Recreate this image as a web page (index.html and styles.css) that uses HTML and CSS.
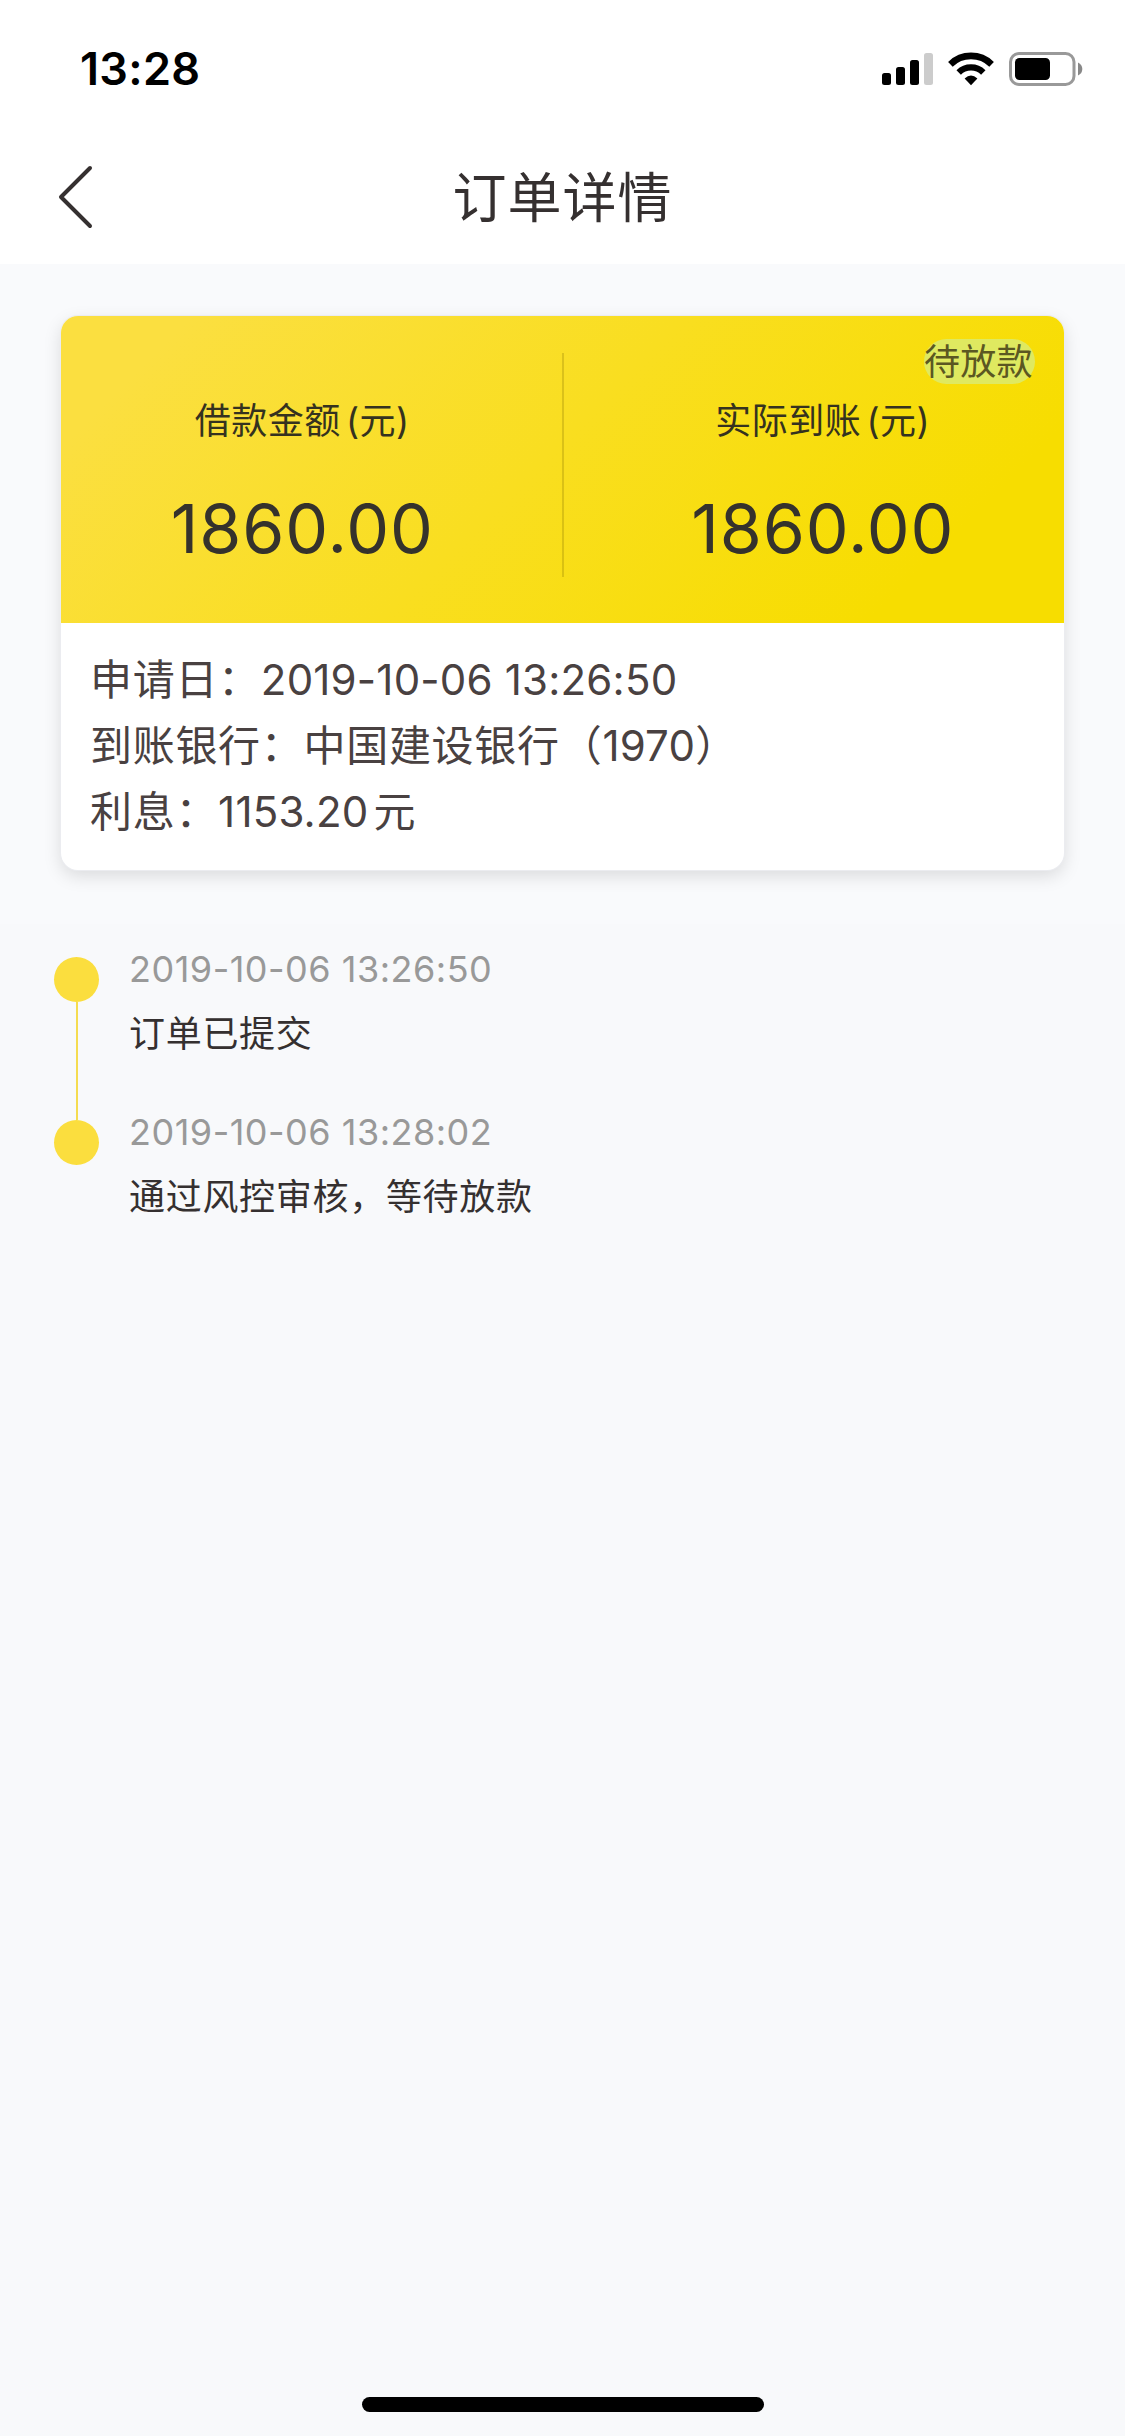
FILE: index.html
```html
<!DOCTYPE html>
<html lang="zh-CN">
<head>
<meta charset="utf-8">
<title>订单详情</title>
<link rel="stylesheet" href="styles.css">
</head>
<body>
<div class="screen">
  <header class="header">
    <div class="status-bar">
      <span class="clock">13:28</span>
      <svg class="status-icons" width="204" height="38" viewBox="880 50 204 38">
        <rect x="882" y="73" width="9" height="12" rx="2.5"/>
        <rect x="896" y="67" width="9" height="18" rx="2.5"/>
        <rect x="910" y="60" width="9" height="25" rx="2.5"/>
        <rect x="924" y="53" width="9" height="32" rx="2.5" fill="#ccc"/>
        <g fill="none" stroke="#000">
          <path d="M950.4 64.3A29.5 29.5 0 0 1 991.6 64.3" stroke-width="6.6"/>
          <path d="M958.7 72.5A17.5 17.5 0 0 1 983.3 72.5" stroke-width="6.3"/>
        </g>
        <path d="M971 85.2L964.6 78.4Q971 72.5 977.4 78.4Z"/>
        <rect x="1010.5" y="53.5" width="63.5" height="31" rx="8.5" fill="none" stroke="#999" stroke-width="3"/>
        <rect x="1015" y="58" width="35" height="22" rx="4.5"/>
        <path d="M1078 62.5Q1082.3 64.5 1082.3 69T1078 75.500Z" fill="#888"/>
      </svg>
    </div>
    <nav class="nav-bar">
      <svg class="back" width="40" height="68" viewBox="0 0 40 68"><path d="M34 5L5 34L34 63" fill="none" stroke="#353030" stroke-width="4" stroke-linecap="round" stroke-linejoin="round"/></svg>
      <h1 class="title">订单详情</h1>
    </nav>
  </header>

  <section class="summary">
    <article class="card">
      <div class="amounts">
        <div class="amount-col">
          <div class="label">借款金额<span class="unit">(元)</span></div>
          <div class="amount">1860.00</div>
        </div>
        <div class="divider"></div>
        <div class="amount-col">
          <div class="label">实际到账<span class="unit">(元)</span></div>
          <div class="amount">1860.00</div>
        </div>
        <span class="badge">待放款</span>
      </div>
      <div class="details">
        <p class="detail">申请日：<span class="num">2019-10-06 13:26:50</span></p>
        <p class="detail">到账银行：中国建设银行（<span class="num">1970</span>）</p>
        <p class="detail">利息：<span class="num interest">1153.20</span>元</p>
      </div>
    </article>
  </section>

  <ol class="timeline">
    <li class="step">
      <div class="rail"><i class="dot"></i><i class="line"></i></div>
      <div class="step-body"><time class="time">2019-10-06 13:26:50</time><p class="text">订单已提交</p></div>
    </li>
    <li class="step">
      <div class="rail"><i class="dot"></i></div>
      <div class="step-body"><time class="time">2019-10-06 13:28:02</time><p class="text">通过风控审核，等待放款</p></div>
    </li>
  </ol>
  <div class="home-indicator"></div>
</div>
</body>
</html>
```
FILE: styles.css
```css
* { box-sizing: border-box; margin: 0; padding: 0; }
body {
  background: #f8f9fb;
  color: #353030;
  font-family: Inter, "Noto Sans CJK SC", sans-serif;
  letter-spacing: 0.7px;
}
.screen { display: flex; flex-direction: column; width: 1125px; height: 2436px; }
.header { height: 264px; background: #fff; }
.status-bar {
  display: flex; justify-content: space-between; align-items: flex-start;
  height: 130px; padding: 50px 41px 0 80px;
}
.clock { color: #000; font-size: 45px; font-weight: 600; line-height: 38px; letter-spacing: 0.3px; }
.status-icons { display: block; }
.nav-bar {
  display: grid; grid-template-columns: 113px 1fr 113px; align-items: center;
  height: 134px;
}
.back { margin-left: 56px; }
.title { padding-top: 3px; font-size: 54px; font-weight: 400; line-height: 72px; text-align: center; letter-spacing: 1px; }

.summary { height: 660px; padding: 52px 61px 0; background: #f9fafc; }
.card {
  height: 554px; border-radius: 17px; overflow: hidden; background: #fff;
  box-shadow: 0 0 0 1px #ebecf0, 0 6px 18px rgba(0, 0, 0, 0.13);
}
.amounts {
  position: relative; display: flex; gap: 18px; height: 307px; padding-top: 37px;
  background: linear-gradient(135deg, #fbdf40 10%, #f7dd00 85%);
}
.amount-col { width: 483px; padding-top: 43px; text-align: center; }
.divider { width: 2px; height: 224px; background: rgba(120, 100, 0, 0.24); }
.label { font-size: 36px; line-height: 50px; color: #35321f; letter-spacing: 0.5px; }
.unit { margin-left: 5px; }
.amount { margin-top: 42px; font-size: 68px; line-height: 80px; color: #35322c; letter-spacing: 0.9px; }
.badge {
  position: absolute; top: 23px; right: 29px; width: 111px; height: 45px;
  border-radius: 23px; background: #dfe960; color: #5b5722;
  font-size: 36px; line-height: 46px; letter-spacing: 0.2px; white-space: nowrap;
}
.details { padding: 24px 29px; }
.detail { font-size: 42px; line-height: 66px; color: #494141; }
.num { letter-spacing: 0.2px; }
.interest { margin-right: 5px; }

.timeline { flex: 1; padding: 33px 54px 0; list-style: none; }
.step { display: flex; gap: 30px; height: 163px; }
.rail { display: flex; flex-direction: column; align-items: center; width: 45px; }
.dot { flex: none; width: 45px; height: 45px; border-radius: 50%; background: #fbde3e; }
.line { width: 2px; flex: 1; background: #f5dc50; }
.time { display: block; height: 52px; font-size: 36px; line-height: 25px; color: #999; letter-spacing: 0.5px; }
.text { font-size: 36px; line-height: 50px; }
.home-indicator { align-self: center; width: 402px; height: 15px; margin-bottom: 24px; border-radius: 8px; background: #000; }
```
